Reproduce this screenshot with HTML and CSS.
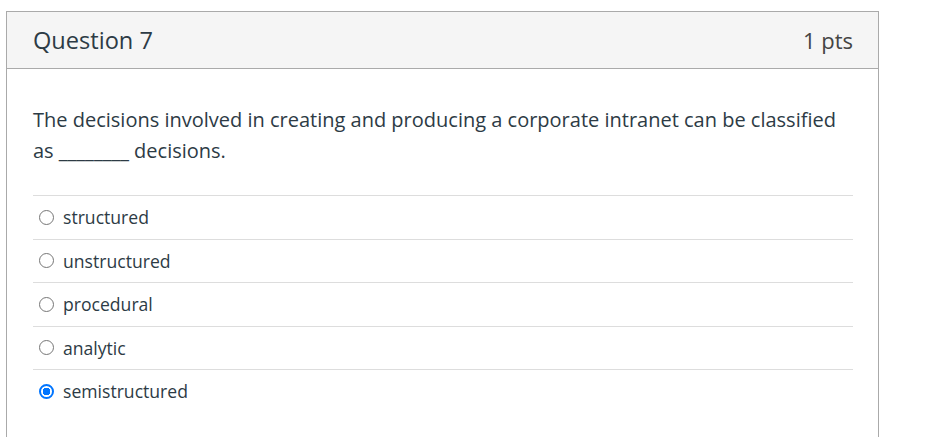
FILE: index.html
```html
<!DOCTYPE html>
<html lang="en">
<head>
<meta charset="utf-8">
<title>Question 7</title>
<link rel="stylesheet" href="styles.css">
</head>
<body>
<div class="quiz">
  <section class="question">
    <header class="question-header">
      <h2 class="question-title">Question 7</h2>
      <span class="question-points">1 pts</span>
    </header>
    <div class="question-body">
      <p class="question-text">The decisions involved in creating and producing a corporate intranet can be classified as ________ decisions.</p>
      <ul class="answers">
        <li class="answer"><span class="radio"></span><span class="answer-label">structured</span></li>
        <li class="answer"><span class="radio"></span><span class="answer-label">unstructured</span></li>
        <li class="answer"><span class="radio"></span><span class="answer-label">procedural</span></li>
        <li class="answer"><span class="radio"></span><span class="answer-label">analytic</span></li>
        <li class="answer"><span class="radio checked"></span><span class="answer-label">semistructured</span></li>
      </ul>
    </div>
  </section>
</div>
</body>
</html>
```

FILE: styles.css
```css
html, body {
  margin: 0;
  padding: 0;
  background: #ffffff;
}

body {
  font-family: "Open Sans", "Liberation Sans", sans-serif;
  color: #2d3b45;
  overflow: hidden;
}

.quiz {
  padding: 11px 0 0 6px;
}

.question {
  width: 873px;
  box-sizing: border-box;
  border: 1px solid #aaaaaa;
  border-bottom: none;
}

.question-header {
  display: flex;
  align-items: center;
  justify-content: space-between;
  height: 56px;
  padding: 0 25px 0 26px;
  background: #f5f5f5;
  border-bottom: 1px solid #aaaaaa;
}

.question-title {
  margin: 0;
  font-size: 23.6px;
  font-weight: 400;
  color: #2d3b45;
}

.question-points {
  font-size: 22px;
  color: #444444;
}

.question-body {
  padding: 35px 25px 40px 26px;
}

.question-text {
  margin: 0 0 29px;
  font-size: 20px;
  line-height: 31px;
}

.answers {
  list-style: none;
  margin: 0;
  padding: 0;
}

.answer {
  display: flex;
  align-items: center;
  height: 42.5px;
  border-top: 1px solid #dddddd;
  font-size: 17.6px;
}

.radio {
  box-sizing: border-box;
  width: 15px;
  height: 15px;
  margin: 0 9px 0 6px;
  border: 1.5px solid #767676;
  border-radius: 50%;
  background: #ffffff;
}

.radio.checked {
  border: 2px solid #0075ff;
  background: radial-gradient(circle, #0075ff 0 3.6px, #ffffff 4px);
}
```
